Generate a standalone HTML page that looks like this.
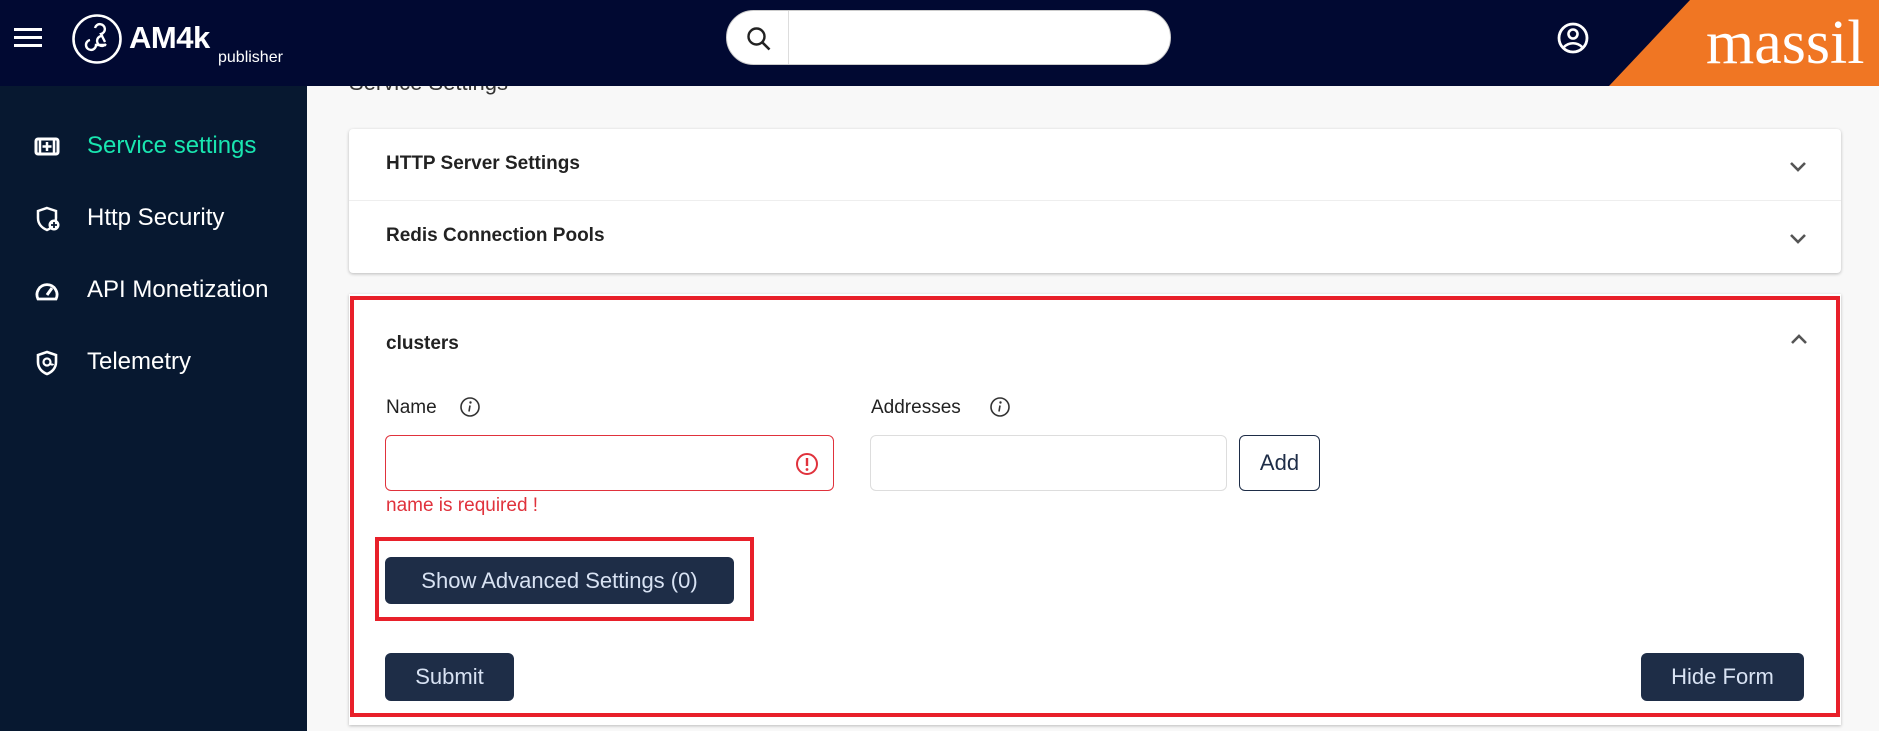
<!DOCTYPE html>
<html><head><meta charset="utf-8"><style>
*{box-sizing:border-box;margin:0;padding:0}
body{width:1879px;height:731px;overflow:hidden;background:#f8f8f8;font-family:"Liberation Sans",Arial,sans-serif;position:relative}
.hdr{position:absolute;left:0;top:0;width:1879px;height:86px;background:#010932;overflow:hidden}
.orange{position:absolute;left:0;top:0;width:1879px;height:86px;background:#f07623;clip-path:polygon(1690px 0,1879px 0,1879px 86px,1609px 86px)}
.side{position:absolute;left:0;top:86px;width:307px;height:645px;background:#071830}
.item{position:absolute;left:0;width:268px;overflow:hidden;white-space:nowrap;color:#fff;font-size:24px;height:30px;line-height:30px}
.item svg{position:absolute;left:34px;top:3px}
.item span{position:absolute;left:87px}
.card{position:absolute;background:#fff;box-shadow:0 1px 3px rgba(0,0,0,.25)}
.t{position:absolute;font-size:19px;font-weight:bold;color:#222}
.lbl{position:absolute;font-size:19px;color:#222}
.btn{position:absolute;background:#1e2d47;color:#d8e2f3;border-radius:6px;font-size:22px;text-align:center}
.inp{position:absolute;border:1px solid #ddd;border-radius:6px;background:#fff}
.chev{position:absolute}
</style></head><body>
<div style="position:absolute;left:349px;top:72px;font-size:22px;color:#333;line-height:22px">Service Settings</div>
<div class="hdr">
 <div class="orange"></div>
 <div style="position:absolute;left:14px;top:28px;width:28px;height:3px;background:#fff;box-shadow:0 8px 0 #fff,0 16px 0 #fff"></div>
 <svg style="position:absolute;left:71px;top:13px" width="52" height="52" viewBox="0 0 52 52"><circle cx="26" cy="26" r="23.5" fill="none" stroke="#fff" stroke-width="2.6"/><path d="M24 15a5 5 0 1 1 6 6l4 8M19 27a5 5 0 1 0 6 5h10M35 31a5 5 0 1 1-3-8" fill="none" stroke="#fff" stroke-width="2.4"/></svg>
 <div style="position:absolute;left:129px;top:20px;color:#fff;font-size:31px;font-weight:bold;letter-spacing:-0.5px">AM4k</div>
 <div style="position:absolute;left:218px;top:49px;color:#fff;font-size:16px">publisher</div>
 <div style="position:absolute;left:726px;top:10px;width:445px;height:55px;border-radius:28px;background:#fff;border:1px solid #ccc"><div style="position:absolute;left:61px;top:0;width:1px;height:53px;background:#ddd"></div>
 <svg style="position:absolute;left:19px;top:15px" width="26" height="26" viewBox="0 0 26 26"><circle cx="10.5" cy="10.5" r="8" fill="none" stroke="#222" stroke-width="2.4"/><path d="M16.5 16.5l7 7" stroke="#222" stroke-width="2.6"/></svg></div>
 <svg style="position:absolute;left:1556px;top:21px" width="34" height="34" viewBox="0 0 34 34"><circle cx="17" cy="17" r="14" fill="none" stroke="#fff" stroke-width="2.8"/><circle cx="17" cy="13" r="4.5" fill="none" stroke="#fff" stroke-width="2.6"/><path d="M8 26c5-5 13-5 18 0" fill="none" stroke="#fff" stroke-width="2.6"/></svg>
 <div style="position:absolute;left:1706px;top:8px;color:#fff;font-family:'Liberation Serif',serif;font-size:62px;line-height:70px">massil</div>
</div>
<div class="side">
 <div class="item" style="top:45px;color:#19e6b0"><svg width="28" height="24" viewBox="0 0 28 24"><rect x="2" y="5" width="22" height="15" rx="2" fill="none" stroke="#fff" stroke-width="3"/><path d="M13 8v9M8.5 12.5h9M6 5v15M20 5v15" stroke="#fff" stroke-width="2.5"/></svg><span>Service settings</span></div>
 <div class="item" style="top:117px"><svg width="28" height="26" viewBox="0 0 28 26"><path d="M13 2l9 3v7c0 6-4 10-9 12-5-2-9-6-9-12V5z" fill="none" stroke="#fff" stroke-width="2.5"/><circle cx="20" cy="19" r="5.5" fill="#fff"/><path d="M20 16v6M17 19h6" stroke="#071830" stroke-width="1.8"/></svg><span>Http Security</span></div>
 <div class="item" style="top:189px"><svg width="28" height="26" viewBox="0 0 28 26"><path d="M4 21a10 10 0 1 1 18 0z" fill="none" stroke="#fff" stroke-width="2.8"/><path d="M13 17l5-7" stroke="#fff" stroke-width="3"/></svg><span>API Monetization</span></div>
 <div class="item" style="top:261px"><svg width="28" height="26" viewBox="0 0 28 26"><path d="M13 2l9 3v7c0 6-4 10-9 12-5-2-9-6-9-12V5z" fill="none" stroke="#fff" stroke-width="2.6"/><circle cx="13" cy="12" r="3.5" fill="none" stroke="#fff" stroke-width="2.2"/><path d="M16.5 12v2a2 2 0 0 0 3 0" fill="none" stroke="#fff" stroke-width="2"/></svg><span>Telemetry</span></div>
</div>
<div class="card" style="left:349px;top:129px;width:1492px;height:144px;border-radius:4px">
 <div style="position:absolute;left:0;top:71px;width:100%;height:1px;background:#eee"></div>
 <div class="t" style="left:37px;top:24px">HTTP Server Settings</div>
 <div class="t" style="left:37px;top:96px">Redis Connection Pools</div>
 <svg class="chev" style="left:1440px;top:32px" width="18" height="12" viewBox="0 0 18 12"><path d="M2 2l7 7 7-7" fill="none" stroke="#555" stroke-width="2.6"/></svg>
 <svg class="chev" style="left:1440px;top:104px" width="18" height="12" viewBox="0 0 18 12"><path d="M2 2l7 7 7-7" fill="none" stroke="#555" stroke-width="2.6"/></svg>
</div>
<div class="card" style="left:349px;top:294px;width:1492px;height:431px"></div>
<div style="position:absolute;left:350px;top:296px;width:1490px;height:421px;border:4px solid #e8202a"></div>
<div class="t" style="left:386px;top:333px">clusters</div>
<svg class="chev" style="left:1790px;top:333px" width="18" height="12" viewBox="0 0 18 12"><path d="M2 10l7-7 7 7" fill="none" stroke="#555" stroke-width="2.6"/></svg>
<div class="lbl" style="left:386px;top:397px">Name</div>
<svg style="position:absolute;left:459px;top:396px" width="22" height="22" viewBox="0 0 22 22"><circle cx="11" cy="11" r="9" fill="none" stroke="#333" stroke-width="1.6"/><circle cx="11.5" cy="6.5" r="1.2" fill="#333"/><path d="M11 9.5l-1 6" stroke="#333" stroke-width="1.6"/></svg>
<div class="lbl" style="left:871px;top:397px">Addresses</div>
<svg style="position:absolute;left:989px;top:396px" width="22" height="22" viewBox="0 0 22 22"><circle cx="11" cy="11" r="9" fill="none" stroke="#333" stroke-width="1.6"/><circle cx="11.5" cy="6.5" r="1.2" fill="#333"/><path d="M11 9.5l-1 6" stroke="#333" stroke-width="1.6"/></svg>
<div class="inp" style="left:385px;top:435px;width:449px;height:56px;border-color:#e0323c"></div>
<svg style="position:absolute;left:795px;top:452px" width="24" height="24" viewBox="0 0 24 24"><circle cx="12" cy="12" r="10" fill="none" stroke="#e0323c" stroke-width="2"/><path d="M12 6v8" stroke="#e0323c" stroke-width="2.4"/><circle cx="12" cy="17.5" r="1.4" fill="#e0323c"/></svg>
<div class="lbl" style="left:386px;top:495px;color:#e0323c">name is required !</div>
<div class="inp" style="left:870px;top:435px;width:357px;height:56px"></div>
<div style="position:absolute;left:1239px;top:435px;width:81px;height:56px;border:1.5px solid #1e2d47;border-radius:6px;font-size:22px;color:#1e2d47;text-align:center;line-height:53px;background:#fff">Add</div>
<div style="position:absolute;left:375px;top:537px;width:379px;height:84px;border:4px solid #e8202a"></div>
<div class="btn" style="left:385px;top:557px;width:349px;height:47px;line-height:47px">Show Advanced Settings (0)</div>
<div class="btn" style="left:385px;top:653px;width:129px;height:48px;line-height:48px">Submit</div>
<div class="btn" style="left:1641px;top:653px;width:163px;height:48px;line-height:48px">Hide Form</div>
</body></html>
